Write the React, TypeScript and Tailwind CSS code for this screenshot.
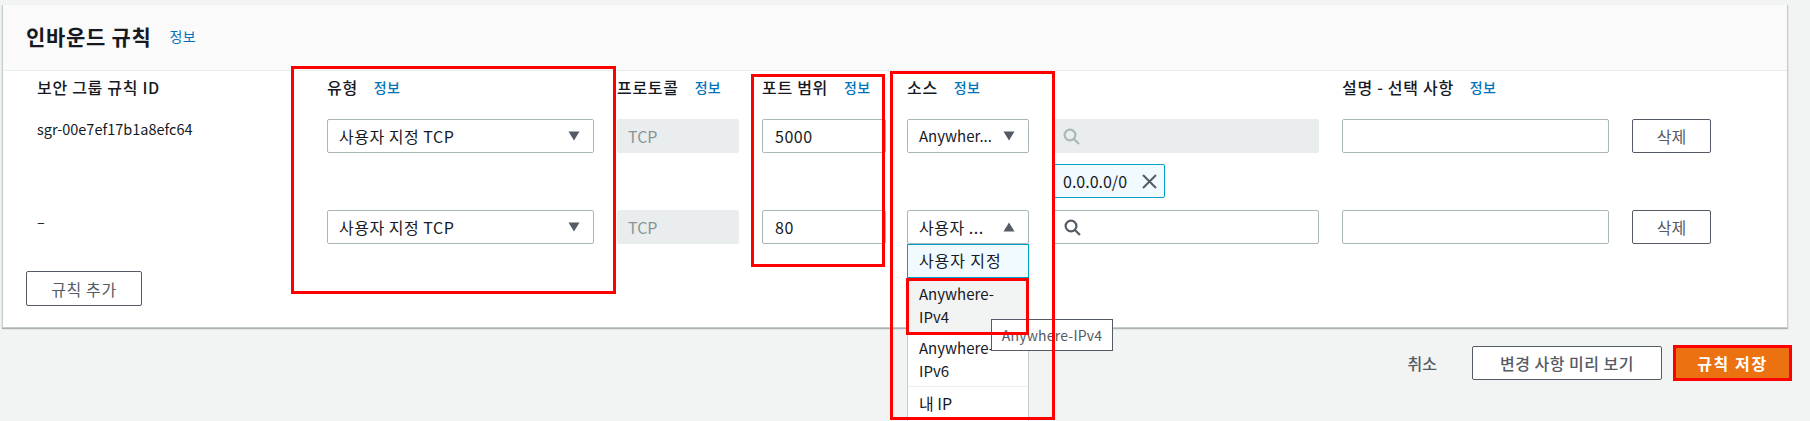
import { ReactNode } from 'react';

const font = { fontFamily: '"Noto Sans CJK KR", "Noto Sans", sans-serif' };

function Info() {
  return <span className="ml-[16px] text-[14px] tracking-[0.3px] text-[#0073bb]">정보</span>;
}

function Label({ text }: { text: string }) {
  return (
    <div className="flex h-[32px] items-center text-[16px] font-medium tracking-[0.7px] text-[#16191f]">
      {text}
      <Info />
    </div>
  );
}

function Caret({ up }: { up?: boolean }) {
  return (
    <svg width="12" height="10" viewBox="0 0 12 10" className="shrink-0">
      <path d={up ? 'M6 0.5 L11.5 9.5 L0.5 9.5 Z' : 'M0.5 0.5 L11.5 0.5 L6 9.5 Z'} fill="#545b64" />
    </svg>
  );
}

function SearchIcon({ muted }: { muted?: boolean }) {
  return (
    <svg width="17" height="17" viewBox="0 0 17 17" fill="none" stroke={muted ? '#aab7b8' : '#545b64'} strokeWidth="2.2">
      <circle cx="7" cy="7" r="5.4" />
      <path d="M11 11 L16 16" />
    </svg>
  );
}

function Select({ text, width, up }: { text: string; width: string; up?: boolean }) {
  return (
    <div
      className={`flex h-[34px] items-center justify-between rounded-[2px] border border-[#aab7b8] bg-white pl-[11px] pr-[13px] text-[16px] tracking-[0.5px] text-[#16191f] ${width}`}
    >
      <span>{text}</span>
      <Caret up={up} />
    </div>
  );
}

function TextBox({ text, width }: { text?: string; width: string }) {
  return (
    <div className={`flex h-[34px] items-center rounded-[2px] border border-[#aab7b8] bg-white pl-[12px] text-[16px] tracking-[0.5px] text-[#16191f] ${width}`}>
      {text}
    </div>
  );
}

function Disabled({ children, width }: { children: ReactNode; width: string }) {
  return (
    <div className={`flex h-[34px] items-center rounded-[2px] bg-[#eaeded] text-[16px] text-[#879596] ${width}`}>{children}</div>
  );
}

function DeleteButton() {
  return (
    <div className="flex h-[34px] w-[79px] items-center justify-center rounded-[2px] border border-[#545b64] bg-white text-[16px] text-[#545b64]">
      삭제
    </div>
  );
}

function Option({ lines, className }: { lines: string[]; className: string }) {
  return (
    <div className={`pl-[11px] leading-[23px] text-[#16191f] ${className}`}>
      {lines.map((l) => (
        <div key={l}>{l}</div>
      ))}
    </div>
  );
}

export default function App() {
  return (
    <div className="relative h-[421px] w-[1810px] overflow-hidden bg-[#f2f3f3] pt-[5px] pl-[2px]" style={font}>
      <div className="h-[323px] w-[1786px] border-x border-b border-[#c4cccc] bg-white shadow-[0_1px_1px_rgba(0,28,36,0.3)]">
        <div className="flex h-[66px] items-center border-b border-[#eaeded] bg-[#fafafa] pl-[23px] pb-[2px]">
          <h2 className="text-[21px] font-bold tracking-[0.7px] text-[#16191f]">인바운드 규칙</h2>
          <span className="ml-[18px] text-[14px] tracking-[0.3px] text-[#0073bb]">정보</span>
        </div>

        <div className="grid grid-cols-[290px_290px_145px_145px_146px_289px_290px_79px] pl-[34px]">
          {/* header */}
          <div className="flex h-[32px] items-center text-[16px] font-medium tracking-[0.7px] text-[#16191f]">보안 그룹 규칙 ID</div>
          <Label text="유형" />
          <Label text="프로토콜" />
          <Label text="포트 범위" />
          <Label text="소스" />
          <div />
          <Label text="설명 - 선택 사항" />
          <div className="h-[48px]" />

          {/* row 1 */}
          <div className="h-[91px] text-[14.5px] leading-[20px] text-[#16191f]">sgr-00e7ef17b1a8efc64</div>
          <Select text="사용자 지정 TCP" width="w-[267px]" />
          <Disabled width="w-[122px] pl-[11px]">TCP</Disabled>
          <TextBox text="5000" width="w-[124px]" />
          <Select text="Anywher..." width="w-[122px] !text-[15px] !tracking-normal" />
          <div>
            <Disabled width="w-[266px] pl-[10px]"><SearchIcon muted /></Disabled>
            <div className="mt-[11px] flex h-[34px] w-[112px] items-center justify-between rounded-[2px] border border-[#00a1c9] bg-[#f1faff] pl-[9px] pr-[7px] text-[16px] text-[#16191f]">
              0.0.0.0/0
              <svg width="15" height="15" viewBox="0 0 15 15" stroke="#545b64" strokeWidth="2" fill="none">
                <path d="M1 1 L14 14 M14 1 L1 14" />
              </svg>
            </div>
          </div>
          <TextBox width="w-[267px]" />
          <DeleteButton />

          {/* row 2 */}
          <div className="h-[61px] text-[14.5px] leading-[24px] text-[#16191f]">–</div>
          <Select text="사용자 지정 TCP" width="w-[267px]" />
          <Disabled width="w-[122px] pl-[11px]">TCP</Disabled>
          <TextBox text="80" width="w-[124px]" />
          <div className="relative">
            <Select text="사용자 ..." width="w-[122px]" up />
            {/* open dropdown list, hangs out of the card */}
            <div className="absolute left-0 top-[34px] z-10 w-[122px] border-x border-[#c4cccc] bg-white">
              <Option lines={['사용자 지정']} className="-mx-px h-[34px] border border-[#00a1c9] bg-[#f1faff] text-[16px] leading-[30px] tracking-[0.9px]" />
              <Option lines={['Anywhere-', 'IPv4']} className="h-[57px] bg-[#f2f3f3] pt-[4px] text-[15px]" />
              <Option lines={['Anywhere-', 'IPv6']} className="h-[52px] border-b border-[#eaeded] pt-[1px] text-[15px]" />
              <Option lines={['내 IP']} className="h-[40px] pt-[5px] text-[16px]" />
            </div>
          </div>
          <div>
            <div className="flex h-[34px] w-[266px] items-center rounded-[2px] border border-[#aab7b8] bg-white pl-[10px]">
              <SearchIcon />
            </div>
          </div>
          <TextBox width="w-[267px]" />
          <DeleteButton />
        </div>

        <div className="pl-[23px]">
          <div className="flex h-[35px] w-[116px] items-center justify-center rounded-[2px] border border-[#545b64] bg-white text-[16px] tracking-[0.6px] text-[#545b64]">
            규칙 추가
          </div>
        </div>
      </div>

      <div className="mt-[17px] flex items-center justify-end pr-[18px]">
        <span className="mr-[35px] text-[16px] font-medium text-[#545b64]">취소</span>
        <div className="flex h-[34px] w-[190px] items-center justify-center rounded-[2px] border border-[#545b64] bg-white text-[16px] font-medium tracking-[0.5px] text-[#545b64]">
          변경 사항 미리 보기
        </div>
        <div className="ml-[11px] flex h-[36px] w-[119px] items-center justify-center border-[3px] border-[#ff0000] bg-[#ec7211] text-[16px] font-bold tracking-[1.6px] text-white">
          규칙 저장
        </div>
      </div>

      {/* tooltip */}
      <div className="absolute left-[991px] top-[319px] z-20 flex h-[32px] w-[122px] items-center justify-center border border-[#545b64] bg-white text-[14px] tracking-[0.2px] text-[#545b64]">
        Anywhere-IPv4
      </div>

      {/* red annotation boxes drawn over the screenshot */}
      <div className="absolute left-[291px] top-[66px] z-30 h-[228px] w-[325px] border-[3px] border-[#ff0000]" />
      <div className="absolute left-[751px] top-[74px] z-30 h-[193px] w-[134px] border-[3px] border-[#ff0000]" />
      <div className="absolute left-[890px] top-[71px] z-30 h-[349px] w-[165px] border-[3px] border-[#ff0000]" />
      <div className="absolute left-[906px] top-[278px] z-30 h-[57px] w-[123px] border-[3px] border-[#ff0000]" />
    </div>
  );
}
